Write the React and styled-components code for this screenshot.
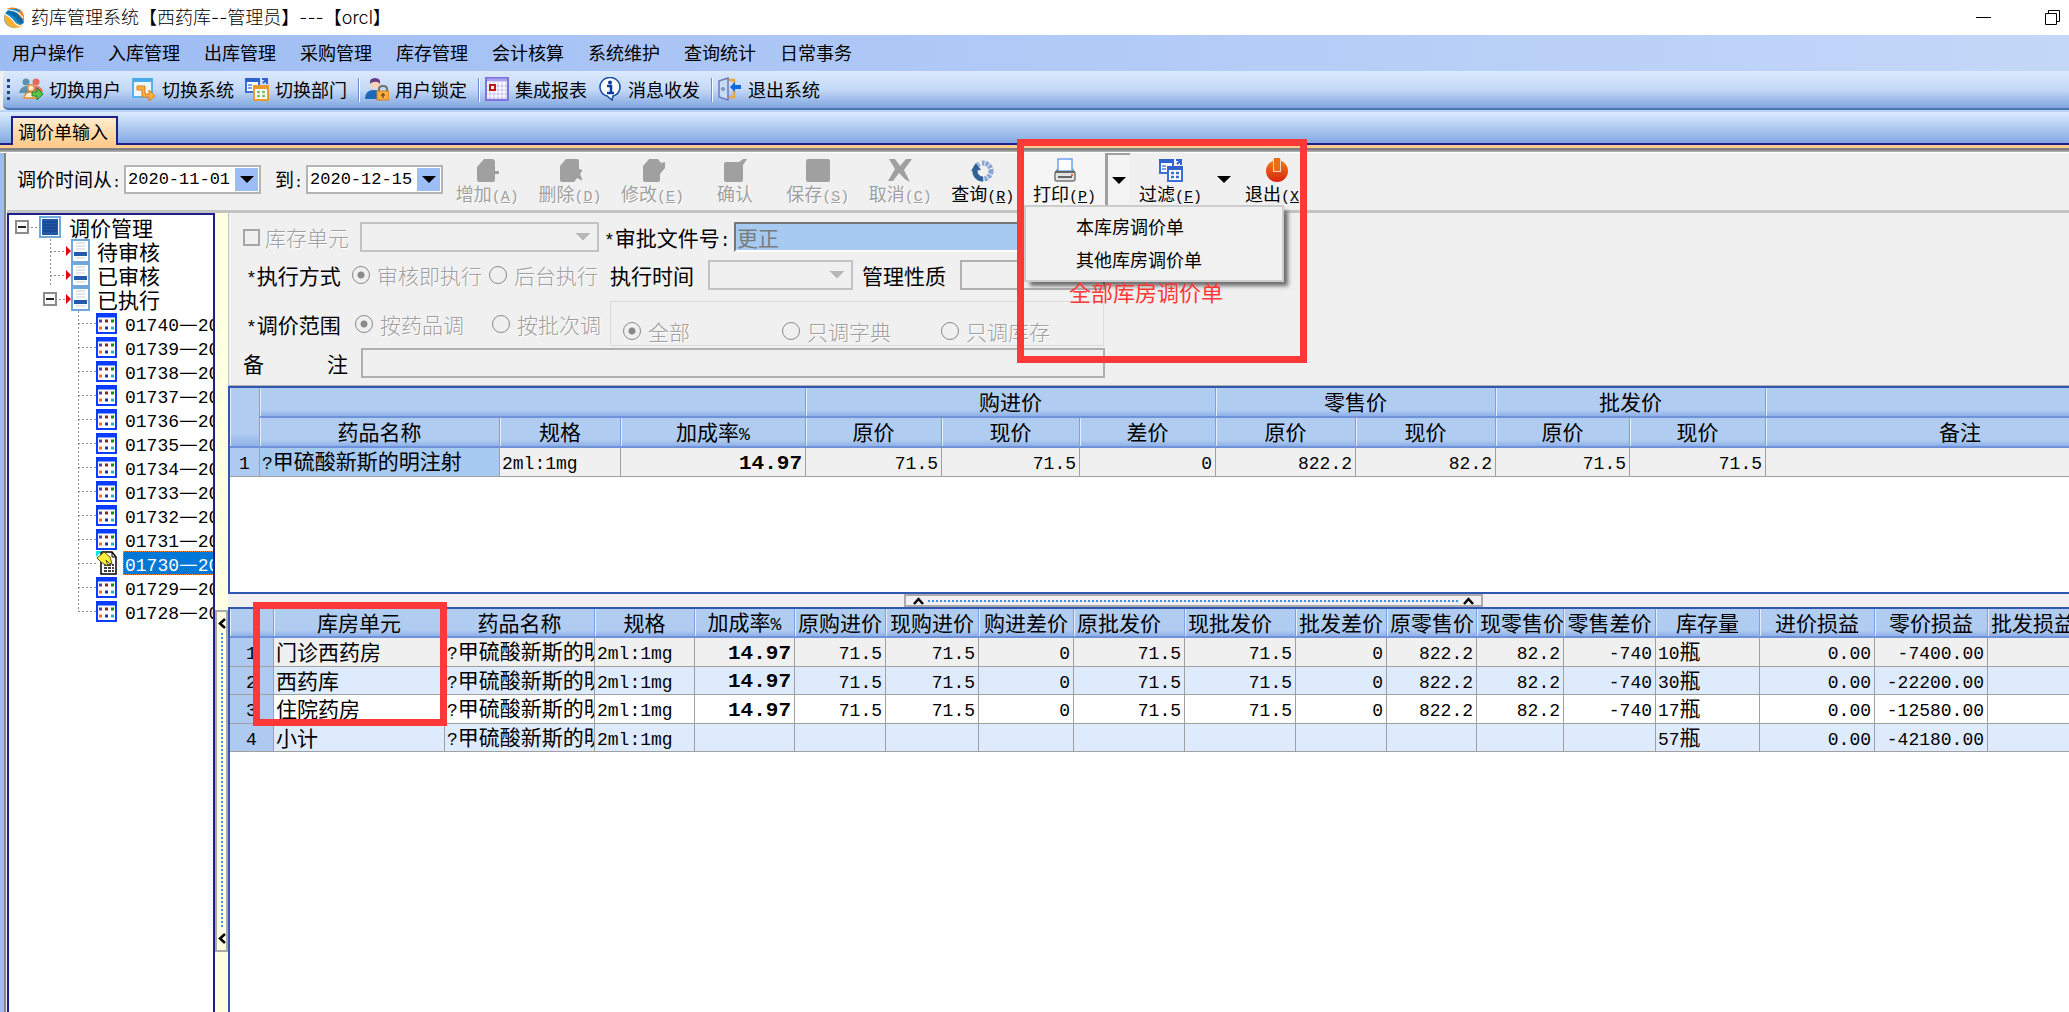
import styled, { createGlobalStyle, css } from "styled-components";

const GlobalStyle = createGlobalStyle`
  * {
    box-sizing: border-box;
  }
  body {
    margin: 0;
    background: #f0f0f0;
    color: #000;
    font-family: "Noto Sans CJK SC", sans-serif;
    font-size: 18px;
    font-weight: 400;
  }
  button, input, select {
    margin: 0;
    padding: 0;
    border: none;
    background: none;
    border-radius: 0;
    color: inherit;
    font: inherit;
  }
  svg {
    flex: none;
  }
`;

const Mono = styled.span`
  font-family: "Liberation Mono", monospace;
  font-size: ${(props) => props.$size || 18}px;
  line-height: 1;
`;

const Window = styled.div`
  height: 100vh;
  display: flex;
  flex-direction: column;
  overflow: hidden;
  position: relative;
`;

/* title bar */

const TitleBar = styled.header`
  flex: none;
  height: 35px;
  padding: 0 8px 0 3px;
  display: flex;
  align-items: center;
  background: #fff;
`;

const Title = styled.h1`
  margin: 0 auto 0 4px;
  font-family: Inter, "Noto Sans CJK SC", sans-serif;
  font-size: 18px;
  font-weight: 300;
  line-height: 34px;
`;

const WindowButton = styled.button`
  width: ${(props) => (props.$end ? 44 : 68)}px;
  height: 35px;
  display: flex;
  align-items: center;
  justify-content: ${(props) => (props.$end ? "flex-end" : "center")};
`;

/* menu and tool bars */

const MenuBar = styled.nav`
  flex: none;
  height: 36px;
  padding-left: 12px;
  display: flex;
  align-items: flex-start;
  gap: 24px;
  background: linear-gradient(90deg, #9ebcf4, #c3d7f8);
`;

const MenuItem = styled.button`
  line-height: 34px;
`;

const ToolBar = styled.div`
  flex: none;
  height: 39px;
  margin-left: 3px;
  padding-left: 4px;
  display: flex;
  align-items: center;
  border-bottom: 2px solid #4b74b4;
  border-radius: 5px 0 0 5px;
  background: linear-gradient(#dbe9fc, #c4d9f7 50%, #7fa5df);
`;

const Grip = styled.span`
  width: 3px;
  height: 21px;
  margin-right: 9px;
  background: repeating-linear-gradient(#27417f 0 3px, transparent 3px 6px);
`;

const ToolItem = styled.button`
  display: flex;
  align-items: center;
  gap: 6px;
  padding: 0 11px 2px 0;
  line-height: 34px;
`;

const ToolSeparator = styled.span`
  width: 2px;
  height: 24px;
  margin-right: 5px;
  border-left: 1px solid #6a8ccb;
  background: #fff;
`;

const TabStrip = styled.div`
  flex: none;
  height: 35px;
  padding-left: 11px;
  display: flex;
  align-items: flex-end;
  border-top: 2px solid #b9d4f8;
  border-bottom: 2px solid #1d2089;
  background: linear-gradient(#dbebff, #84a9e2);
`;

const Tab = styled.button`
  height: 29px;
  margin-bottom: -2px;
  padding: 0 8px 2px 5px;
  border: 2px solid #1d2089;
  border-bottom: none;
  background: linear-gradient(#ffeccb, #ffcb8e);
  line-height: 24px;
`;

const TabEdge = styled.div`
  flex: none;
  height: 8px;
  border-top: 3px solid #ffcb8e;
  border-bottom: 1px solid #fff;
  background: linear-gradient(#8a8a8a, #777 30%, #b8b8b8);
`;

const Frame = styled.div`
  flex: 1;
  min-height: 0;
  display: flex;
  flex-direction: column;
  border-left: 4px solid #9dbdf2;
  box-shadow: inset 2px 0 #858585;
  padding-left: 3px;
`;

/* command bar */

const CommandBar = styled.div`
  flex: none;
  height: 60px;
  padding-left: 10px;
  display: flex;
  align-items: flex-start;
  border-bottom: 3px solid #c3c3c3;
  position: relative;
  z-index: 2;
`;

const DateLabel = styled.label`
  margin-top: 12px;
  font-size: 19px;
  line-height: 28px;
  white-space: nowrap;
`;

const DateBox = styled.span`
  width: 137px;
  height: 29px;
  margin: 12px ${(props) => (props.$last ? 3 : 14)}px 0 3px;
  padding: 1px;
  display: flex;
  flex: none;
  border: 2px solid #b4b4b4;
  background: #fff;
`;

const DateInput = styled.input`
  flex: 1;
  min-width: 0;
  padding-left: 1px;
  font-family: "Liberation Mono", monospace;
  font-size: 17px;
`;

const DateDrop = styled.button`
  width: 23px;
  background: #9dbdf6;
  display: flex;
  align-items: center;
  justify-content: center;
`;

const Triangle = styled.span`
  border: 7px solid transparent;
  border-top-color: #000;
  border-bottom: none;
`;

const Commands = styled.div`
  flex: 0 0 578px;
  display: flex;
`;

const Command = styled.button`
  ${(props) => (props.$fixed ? "flex: 0 0 81px;" : "flex: 1;")}
  height: 52px;
  display: flex;
  flex-direction: column;
  align-items: center;
  padding-top: 5px;
  line-height: 22px;
  white-space: nowrap;
  &:disabled {
    color: #a0a0a0;
    text-shadow: 1px 1px #fff;
  }
`;

const PrintGroup = styled.div`
  position: relative;
  display: flex;
  background: #f5f5f5;
`;

const DropButton = styled.button`
  width: 25px;
  height: 52px;
  display: flex;
  align-items: center;
  justify-content: center;
  ${(props) =>
    props.$open &&
    css`
      border-left: 3px solid #a0a0a0;
      border-top: 2px solid #a0a0a0;
      background: #f3f3f3;
    `}
`;

const DropMenu = styled.div`
  position: absolute;
  left: 0;
  top: 52px;
  width: 260px;
  height: 77px;
  padding: 3px 0 4px 50px;
  display: flex;
  flex-direction: column;
  border: 2px solid #ccc;
  background: #f1f1f1;
  box-shadow: 5px 5px 4px -1px rgba(0, 0, 0, 0.55);
`;

const DropItem = styled.button`
  height: 33px;
  line-height: 33px;
  text-align: left;
`;

const RedBox = styled.div`
  position: absolute;
  border: 7px solid #fd3838;
  pointer-events: none;
`;

const PrintMark = styled(RedBox)`
  left: -7px;
  top: -14px;
  width: 290px;
  height: 224px;
`;

const UnitMark = styled(RedBox)`
  left: 23px;
  top: -7px;
  width: 194px;
  height: 124px;
`;

const RedNote = styled.span`
  position: absolute;
  left: 45px;
  top: 122px;
  color: #fd3838;
  font-size: 22px;
  line-height: 32px;
  white-space: nowrap;
`;

/* tree */

const Body = styled.div`
  flex: 1;
  min-height: 0;
  display: flex;
`;

const Tree = styled.ul`
  flex: 0 0 208px;
  margin: 0;
  padding: 0;
  list-style: none;
  overflow: hidden;
  border: 2px solid #1d2089;
  border-bottom: none;
  background: #fff;
  font-size: 21px;
`;

const TreeRow = styled.li`
  height: 24px;
  display: flex;
  align-items: center;
  line-height: 22px;
  white-space: nowrap;
`;

const Indent = styled.span`
  flex: 0 0 ${(props) => props.$width}px;
`;

/* vertical guide with a branch to the right */
const Guide = styled.span`
  flex: 0 0 ${(props) => props.$width}px;
  height: ${(props) => (props.$last ? 13 : 24)}px;
  align-self: flex-start;
  background:
    linear-gradient(90deg, #8c8c8c 50%, transparent 50%) 0 12px / 4px 1px repeat-x,
    linear-gradient(#8c8c8c 50%, transparent 50%) 0 0 / 1px 4px repeat-y;
`;

const Expander = styled.button`
  flex: none;
  width: 14px;
  height: 14px;
  border: 2px solid #8c8c8c;
  background: linear-gradient(#222, #222) center / 8px 2px no-repeat #fff;
`;

const Branch = styled.span`
  flex: 0 0 ${(props) => props.$width}px;
  height: 1px;
  background: repeating-linear-gradient(90deg, transparent 0 2px, #8c8c8c 2px 4px);
`;

const RedArrow = styled.span`
  flex: none;
  border: 5px solid transparent;
  border-left-color: #e60012;
  border-right: none;
`;

const TreeText = styled.span`
  margin-left: ${(props) => props.$gap}px;
`;

const TreeCode = styled.span`
  flex: 1;
  height: 24px;
  margin-left: 6px;
  padding-left: 2px;
  line-height: 22px;
  ${(props) =>
    props.$selected &&
    css`
      color: #fff;
      background: #0078d7;
      outline: 1px dotted #ff8728;
      outline-offset: -1px;
    `}
`;

const SideSplitter = styled.div`
  flex: 0 0 13px;
  padding-top: 397px;
  background: #ffffe1;
`;

const Handle = styled.div`
  display: flex;
  align-items: center;
  justify-content: space-between;
  border: 2px solid #aaa;
  background: ${(props) => (props.$vertical ? "#ffffe1" : "#f0f0f0")};
  ${(props) =>
    props.$vertical
      ? "height: 342px; flex-direction: column; padding: 6px 0;"
      : "width: 30%; height: 13px; margin: 0 auto; padding: 0 7px;"}
`;

const Dots = styled.span`
  flex: 1;
  ${(props) =>
    props.$vertical
      ? "width: 2px; margin: 4px 0; background: repeating-linear-gradient(#3c94de 0 2px, transparent 2px 4px);"
      : "height: 2px; margin: 0 4px; background: repeating-linear-gradient(90deg, #3c94de 0 2px, transparent 2px 4px);"}
`;

const Main = styled.main`
  flex: 1;
  min-width: 0;
  display: flex;
  flex-direction: column;
  overflow: hidden;
`;

/* form */

const Form = styled.form`
  flex: none;
  height: 173px;
  padding: 9px 0 0 14px;
  border-left: 1px solid #c3c3c3;
  border-bottom: 1px solid #b0b0b0;
  font-size: 21px;
`;

const FormRow = styled.div`
  height: ${(props) => props.$height || 38}px;
  display: flex;
  align-items: flex-start;
`;

const FieldLabel = styled.label`
  flex: none;
  width: ${(props) => props.$width}px;
  padding-left: ${(props) => props.$indent || 0}px;
  line-height: 30px;
  white-space: nowrap;
  ${(props) =>
    props.$muted &&
    css`
      color: #a0a0a0;
      text-shadow: 1px 1px #fff;
      font-weight: 300;
    `}
`;

const NoteLabel = styled(FieldLabel)`
  display: flex;
  justify-content: space-between;
  margin-right: 13px;
`;

const CheckBox = styled.input`
  appearance: none;
  width: 17px;
  height: 17px;
  margin: 7px 5px 0 0;
  border: 2px solid #a6a6a6;
`;

const Radio = styled.input`
  appearance: none;
  flex: none;
  width: 18px;
  height: 18px;
  margin: 6px 7px 0 0;
  border: 1px solid #8a8a8a;
  border-radius: 50%;
  &:checked {
    background: radial-gradient(circle, #8a8a8a 3px, transparent 4px);
  }
`;

const Combo = styled.select`
  appearance: none;
  flex: none;
  width: ${(props) => props.$width}px;
  height: 30px;
  margin-right: ${(props) => props.$after}px;
  border: 2px solid #b0b0b0;
  background:
    linear-gradient(to bottom right, #a0a0a0 50%, transparent 50%) right 7px center / 7px 8px no-repeat,
    linear-gradient(to bottom left, #a0a0a0 50%, transparent 50%) right 14px center / 7px 8px no-repeat;
`;

const TextField = styled.input`
  flex: none;
  width: ${(props) => props.$width}px;
  height: 30px;
  border: 2px solid #b0b0b0;
  ${(props) =>
    props.$filled &&
    css`
      padding-left: 1px;
      border-color: #777 #fff #fff #777;
      background: #a6caf0;
      color: #7b7b7b;
    `}
`;

const ScopeLeft = styled.div`
  width: 367px;
  padding-top: 8px;
  display: flex;
`;

const ScopeBox = styled.fieldset`
  width: 494px;
  height: 45px;
  margin: 0;
  padding: 14px 0 0 12px;
  display: flex;
  align-items: flex-start;
  border: 1px solid #dcdcdc;
`;

/* grids */

const GridBox = styled.div`
  ${(props) => (props.$grow ? "flex: 1;" : "flex: 0 0 208px;")}
  position: relative;
  border: 2px solid #3158b0;
  border-right: none;
  ${(props) => props.$grow && "border-bottom: none;"}
  background: #fff;
`;

const Grid = styled.table`
  table-layout: fixed;
  width: ${(props) => props.$width}px;
  border-collapse: separate;
  border-spacing: 0;
  font-size: 21px;
`;

const Th = styled.th`
  height: ${(props) => props.$height || 30}px;
  padding: 0 3px 2px;
  border-right: 1px solid #7c9ee2;
  border-bottom: 2px solid #6f93da;
  box-shadow: inset 1px 0 #e4eefc;
  background: linear-gradient(#b0ccf1 78%, #8fb1e8);
  font-weight: 400;
  line-height: 24px;
  overflow: hidden;
  white-space: nowrap;
  text-align: ${(props) => props.$align || "center"};
`;

const Tr = styled.tr`
  height: 28px;
  background: ${(props) => props.$tone};
  &:nth-child(odd) {
    height: 29px;
  }
`;

const Td = styled.td`
  padding: ${(props) => (props.$align === "right" ? "0 3px 2px 0" : "0 2px 2px")};
  border-right: 1px solid #a0a0a0;
  border-bottom: 1px solid #a0a0a0;
  line-height: 22px;
  overflow: hidden;
  white-space: nowrap;
  text-align: ${(props) => props.$align || "left"};
  ${(props) => props.$active && "background: #a6caf0;"}
  ${(props) =>
    props.$bold &&
    css`
      & > span {
        font-size: 21px;
        font-weight: 700;
      }
    `}
`;

const RowNumber = styled(Td)`
  background: #aecaf0;
  text-align: center;
`;

const GridSplitter = styled.div`
  flex: none;
  width: calc(100% + 89px);
  background: #f0f0f0;
`;

/* icons */

const Logo = () => (
  <svg width="24" height="24" viewBox="0 0 24 24">
    <circle cx="11" cy="12" r="10" fill="#1687c9" />
    <path d="M3 3Q11-1 18 5Q14 5 15 9Q20 12 21 17Q22 7 17 3Z" fill="#f58220" />
    <path d="M1 12Q3 21 11 22Q18 22 20 19Q14 19 11 15Q6 12 3 8Z" fill="#fbb034" />
    <path d="M3 7Q12 9 15 15Q18 19 21 17Q18 9 11 6Q6 4 3 7Z" fill="#0867a8" />
    <path d="M2 8Q9 12 12 17Q14 20 19 20M6 4Q15 4 20 12" fill="none" stroke="#fff" strokeWidth="1.2" />
  </svg>
);

const SwitchUserIcon = () => (
  <svg width="24" height="24" viewBox="0 0 24 24">
    <circle cx="7" cy="5" r="3.5" fill="#5d92ae" />
    <path d="M0 16Q1 10 7 9Q12 10 12 16Z" fill="#5d92ae" />
    <circle cx="17" cy="5" r="3.5" fill="#e26b5c" />
    <path d="M12 14Q13 9 18 9Q23 10 24 15Z" fill="#e26b5c" />
    <circle cx="12" cy="11" r="3.3" fill="#fff1dd" stroke="#e58a2f" strokeWidth="1.5" />
    <path d="M5 21Q6 15 12 15Q16 15 17 21Z" fill="#fff1dd" stroke="#e58a2f" strokeWidth="1.5" />
    <path d="M13 15h5v-4l6 6-6 6v-4h-5z" fill="#5cc64a" stroke="#23832b" />
  </svg>
);

const SwitchSystemIcon = () => (
  <svg width="24" height="24" viewBox="0 0 24 24">
    <rect x="1" y="2" width="19" height="18" fill="#eef7fe" stroke="#55b4ec" strokeWidth="2" />
    <path d="M1 3h19" stroke="#4aa9e8" strokeWidth="4" />
    <path d="M5 9h8v8h4v-4l6 6-6 5v-4h-7v-7H5z" fill="#fbb040" stroke="#e07c1a" />
  </svg>
);

const SwitchDeptIcon = ({ mono }) => (
  <svg width="24" height="24" viewBox="0 0 24 24">
    <rect x="1" y="2" width="13" height="13" fill="#fff" stroke="#3c6fd6" strokeWidth="2" />
    <path d="M0 3h15" stroke="#2f62cc" strokeWidth="4" />
    <path d="M3 8h4M3 11h4" stroke="#7fa2e6" strokeWidth="2" />
    <path d="M17 2h5v5M22 2l-4 4" fill="none" stroke="#2f62cc" strokeWidth="2" />
    <rect x="9" y="9" width="14" height="14" fill="#fff" stroke={mono ? "#3c6fd6" : "#eb9a2e"} strokeWidth="2" />
    <path d="M8 10h16" stroke={mono ? "#2f62cc" : "#eb9a2e"} strokeWidth="4" />
    <path d="M12 15h3M17 15h3M12 19h3M17 19h3" stroke={mono ? "#3c6fd6" : "#86bf6b"} strokeWidth="2.5" />
  </svg>
);

const LockUserIcon = () => (
  <svg width="24" height="24" viewBox="0 0 24 24">
    <path d="M0 22Q0 13 9 13Q17 13 18 22Z" fill="#1d68b8" />
    <circle cx="10" cy="7" r="5" fill="#f4d4bd" />
    <path d="M5 7Q4 1 10 1Q16 1 15 7Q13 4 9 5Q6 5 5 7Z" fill="#6a3a80" />
    <path d="M14 14v-2q0-3 4-3t4 3v2" fill="none" stroke="#6f6f6f" strokeWidth="2" />
    <rect x="12" y="14" width="12" height="9" fill="#f3b04a" stroke="#cf7d1a" />
    <path d="M18 16v5M16 18h4" stroke="#8b4c10" strokeWidth="1.5" />
  </svg>
);

const ReportIcon = () => (
  <svg width="24" height="24" viewBox="0 0 24 24">
    <rect x="1" y="1" width="22" height="22" fill="#fff" stroke="#7b74dc" strokeWidth="2" />
    <path d="M5 5v17M9 5v17M13 5v17M17 5v17M21 5v17M2 9h20M2 13h20M2 17h20M2 21h20" stroke="#c3beef" />
    <path d="M2 3h20" stroke="#a9a3ee" strokeWidth="3" />
    <rect x="5" y="8" width="5" height="5" fill="#fff" stroke="#c41616" strokeWidth="2" />
  </svg>
);

const InfoIcon = () => (
  <svg width="24" height="24" viewBox="0 0 24 24">
    <path d="M9 19a10 9.5 0 1 1 6 0L14 23z" fill="#fff" stroke="#1b4ea8" strokeWidth="1.6" />
    <circle cx="12" cy="5.5" r="2" fill="#0a3a9c" />
    <path d="M9 9h4v7M9 16h7" fill="none" stroke="#0a3a9c" strokeWidth="2.5" />
  </svg>
);

const ExitDoorIcon = () => (
  <svg width="24" height="24" viewBox="0 0 24 24">
    <path d="M8 3h8v17H8" fill="none" stroke="#e9a93b" strokeWidth="2.5" />
    <path d="M1 4l9-3v22l-9-3z" fill="#c5dcf6" stroke="#7079b8" strokeWidth="1.5" />
    <circle cx="5" cy="12" r="1.3" fill="#fff" stroke="#4a5b9c" />
    <path d="M12 10l5-5v3h6v4h-6v3z" fill="#0a6bd6" />
  </svg>
);

const CommandIcon = ({ d }) => (
  <svg width="24" height="24" viewBox="0 0 24 24">
    <path d={d} fill="#a0a0a0" />
  </svg>
);

const QueryIcon = () => (
  <svg width="24" height="24" viewBox="0 0 24 24">
    <circle cx="12" cy="13" r="8" fill="none" stroke="#86a5d6" strokeWidth="5" strokeDasharray="3 1" />
    <path d="M12 21A8 8 0 0 1 4 12" fill="none" stroke="#2f6298" strokeWidth="5" />
    <path d="M0 13l5-8 5 7z" fill="#2f6298" />
    <path d="M6 3l5 0v6z" fill="#f0f0f0" />
  </svg>
);

const PrinterIcon = () => (
  <svg width="24" height="24" viewBox="0 0 24 24">
    <path d="M5 11L2 15v6q0 2 2 2h16q2 0 2-2v-6l-3-4z" fill="#e4e4e4" stroke="#777" strokeWidth="1.5" />
    <path d="M5 1h14v12H5z" fill="#fff" stroke="#6aa2ee" strokeWidth="1.5" />
    <path d="M2 14h20M5 19h14" stroke="#666" strokeWidth="2" />
    <circle cx="19" cy="17" r="1" fill="#e53c22" />
  </svg>
);

const PowerIcon = () => (
  <svg width="24" height="24" viewBox="0 0 24 24">
    <defs>
      <linearGradient id="power" x1="0" y1="0" x2="0" y2="1">
        <stop offset="0" stopColor="#f08019" />
        <stop offset="1" stopColor="#d8220e" />
      </linearGradient>
    </defs>
    <circle cx="12" cy="13" r="11" fill="url(#power)" />
    <path d="M8 0h8v14H8z" fill="#f3d6bb" />
    <path d="M9 0h6v13H9z" fill="#e86f12" />
  </svg>
);

const RootIcon = () => (
  <svg width="22" height="22" viewBox="0 0 22 22">
    <rect x="1" y="1" width="20" height="20" fill="#fff" stroke="#6fa8dc" strokeWidth="2" />
    <rect x="3" y="3" width="16" height="16" fill="#2458a8" />
    <path d="M4 6h14M4 9h14M4 12h14M4 15h14" stroke="#0d3a80" />
  </svg>
);

const PageIcon = () => (
  <svg width="19" height="24" viewBox="0 0 19 24">
    <rect x="1" y="1" width="17" height="22" fill="#fff" stroke="#6fa8dc" strokeWidth="2" />
    <path d="M5 4h9M5 7h9M5 10h9M5 19h9" stroke="#ccc" />
    <path d="M3 15h13" stroke="#2458a8" strokeWidth="4" />
  </svg>
);

const SheetIcon = () => (
  <svg width="21" height="21" viewBox="0 0 21 21">
    <rect x="1" y="1" width="19" height="19" fill="#fff" stroke="#0a3cff" strokeWidth="2" />
    <path d="M0 2h21" stroke="#0a3cff" strokeWidth="5" />
    <path d="M3 8h3" stroke="#6b2fa0" strokeWidth="3" />
    <path d="M9 8h3" stroke="#992020" strokeWidth="3" />
    <path d="M15 8h3" stroke="#009a00" strokeWidth="3" />
    <path d="M3 15h3" stroke="#ff6a2a" strokeWidth="3" />
    <path d="M9 15h3" stroke="#10399c" strokeWidth="3" />
    <path d="M15 15h3" stroke="#22b0c8" strokeWidth="3" />
  </svg>
);

const OpenSheetIcon = () => (
  <svg width="21" height="24" viewBox="0 0 21 24">
    <path d="M5 1h11l4 5v17H5z" fill="#fff" stroke="#000" strokeWidth="1.5" />
    <path d="M16 1v5h4" fill="none" stroke="#000" />
    <path d="M8 14h10M8 17h10M8 20h10" stroke="#000" strokeDasharray="3 1" strokeWidth="1.5" />
    <path d="M0 0h6L0 6z" fill="#00e5e5" />
    <path d="M1 7L8 1l6 5 2 7-3-1-3-3 2 6-4-2-3-2z" fill="#ffee3a" stroke="#5a5200" />
  </svg>
);

const Caret = ({ left }) => (
  <svg width={left ? 8 : 11} height={left ? 11 : 8} viewBox={left ? "0 0 8 11" : "0 0 11 8"}>
    <path d={left ? "M7 1L2 5.5L7 10" : "M1 7L5.5 2L10 7"} fill="none" stroke="#000" strokeWidth="2.5" />
  </svg>
);

/* data */

const menus = ["用户操作", "入库管理", "出库管理", "采购管理", "库存管理", "会计核算", "系统维护", "查询统计", "日常事务"];

const tools = [
  { text: "切换用户", icon: <SwitchUserIcon /> },
  { text: "切换系统", icon: <SwitchSystemIcon /> },
  { text: "切换部门", icon: <SwitchDeptIcon />, split: true },
  { text: "用户锁定", icon: <LockUserIcon />, split: true },
  { text: "集成报表", icon: <ReportIcon /> },
  { text: "消息收发", icon: <InfoIcon />, split: true },
  { text: "退出系统", icon: <ExitDoorIcon /> },
];

const commands = [
  { text: "增加", hot: "A", d: "M2 9L9 1h8q3 0 3 3v9h4v3h-4v6q0 2-2 2H4q-2 0-2-2z" },
  { text: "删除", hot: "D", d: "M2 8L8 1h11q2 0 2 2v8l4 1-3 4 3 7-6-3-3 4H4q-2 0-2-2z" },
  { text: "修改", hot: "E", d: "M2 8L8 1h9l3 4 4-1v6l-5 6v6q0 2-2 2H4q-2 0-2-2z" },
  { text: "确认", d: "M1 6q0-2 2-2h13l4-3h4l-4 6v15q0 2-2 2H3q-2 0-2-2z" },
  { text: "保存", hot: "S", d: "M0 3q0-2 2-2h20q2 0 2 2v19q0 2-2 2H2q-2 0-2-2z" },
  { text: "取消", hot: "C", d: "M1 1h6l5 7 6-7h6l-8 11 6 12-4-2-7-7-6 8H0l7-12z" },
];

const codes = ["01740", "01739", "01738", "01737", "01736", "01735", "01734", "01733", "01732", "01731", "01730", "01729", "01728"];

const priceCols = [30, 240, 121, 185, 136, 138, 136, 140, 140, 134, 136, 389];
const priceHeads = ["药品名称", "规格", "加成率%", "原价", "现价", "差价", "原价", "现价", "原价", "现价", "备注"];
const priceRow = ["71.5", "71.5", "0", "822.2", "82.2", "71.5", "71.5", ""];

const stockCols = [44, 171, 150, 100, 100, 91, 93, 95, 111, 111, 91, 90, 87, 92, 104, 115, 113, 115];
const stockHeads = [
  "库房单元", "药品名称", "规格", "加成率%", "原购进价", "现购进价", "购进差价", "原批发价", "现批发价",
  "批发差价", "原零售价", "现零售价", "零售差价", "库存量", "进价损益", "零价损益", "批发损益",
];
const leftHeads = ["原批发价", "现批发价", "现零售价", "批发损益"];
const prices = ["14.97", "71.5", "71.5", "0", "71.5", "71.5", "0", "822.2", "82.2", "-740"];
const stockRows = [
  { unit: "门诊西药房", prices, count: "10", loss: "-7400.00", tone: "#f0f0f0" },
  { unit: "西药库", prices, count: "30", loss: "-22200.00", tone: "#deebfc" },
  { unit: "住院药房", prices, count: "17", loss: "-12580.00", tone: "#fff" },
  { unit: "小计", prices: prices.map(() => ""), count: "57", loss: "-42180.00", tone: "#deebfc" },
];

const total = (widths) => widths.reduce((sum, width) => sum + width, 0);

const Columns = ({ widths }) => (
  <colgroup>
    {widths.map((width, i) => (
      <col key={i} width={width} />
    ))}
  </colgroup>
);

const headText = (text) =>
  text.endsWith("%") ? (
    <>
      {text.slice(0, -1)}
      <Mono>%</Mono>
    </>
  ) : (
    text
  );

const HotKey = ({ letter }) => (
  <Mono $size={15}>
    (<u>{letter}</u>)
  </Mono>
);

const TreePanel = () => (
  <Tree>
    <TreeRow>
      <Indent $width={6} />
      <Expander aria-label="调价管理" />
      <Branch $width={10} />
      <RootIcon />
      <TreeText $gap={8}>调价管理</TreeText>
    </TreeRow>
    {["待审核", "已审核"].map((text) => (
      <TreeRow key={text}>
        <Indent $width={41} />
        <Guide $width={16} />
        <RedArrow />
        <PageIcon />
        <TreeText $gap={7}>{text}</TreeText>
      </TreeRow>
    ))}
    <TreeRow>
      <Indent $width={34} />
      <Expander aria-label="已执行" />
      <Branch $width={9} />
      <RedArrow />
      <PageIcon />
      <TreeText $gap={7}>已执行</TreeText>
    </TreeRow>
    {codes.map((code, i) => (
      <TreeRow key={code}>
        <Indent $width={69} />
        <Guide $width={18} $last={i === codes.length - 1} />
        {code === "01730" ? <OpenSheetIcon /> : <SheetIcon />}
        <TreeCode $selected={code === "01730"}>
          <Mono>{code}</Mono>—<Mono>20</Mono>
        </TreeCode>
      </TreeRow>
    ))}
  </Tree>
);

const PriceForm = () => (
  <Form>
    <FormRow>
      <CheckBox type="checkbox" id="unit" disabled />
      <FieldLabel htmlFor="unit" $width={95} $muted>库存单元</FieldLabel>
      <Combo $width={239} $after={5} aria-label="库存单元" disabled />
      <FieldLabel htmlFor="doc" $width={130}><Mono>*</Mono>审批文件号<Mono>:</Mono></FieldLabel>
      <TextField id="doc" $width={371} $filled defaultValue="更正" />
    </FormRow>
    <FormRow $height={41}>
      <FieldLabel as="span" $width={109} $indent={3}><Mono>*</Mono>执行方式</FieldLabel>
      <Radio type="radio" name="mode" id="now" defaultChecked disabled />
      <FieldLabel htmlFor="now" $width={112} $muted>审核即执行</FieldLabel>
      <Radio type="radio" name="mode" id="later" disabled />
      <FieldLabel htmlFor="later" $width={96} $muted>后台执行</FieldLabel>
      <FieldLabel htmlFor="time" $width={98}>执行时间</FieldLabel>
      <Combo id="time" $width={145} $after={9} disabled />
      <FieldLabel htmlFor="kind" $width={98}>管理性质</FieldLabel>
      <TextField id="kind" $width={145} disabled />
    </FormRow>
    <FormRow $height={47}>
      <ScopeLeft>
        <FieldLabel as="span" $width={112} $indent={3}><Mono>*</Mono>调价范围</FieldLabel>
        <Radio type="radio" name="scope" id="drug" defaultChecked disabled />
        <FieldLabel htmlFor="drug" $width={112} $muted>按药品调</FieldLabel>
        <Radio type="radio" name="scope" id="batch" disabled />
        <FieldLabel htmlFor="batch" $width={90} $muted>按批次调</FieldLabel>
      </ScopeLeft>
      <ScopeBox>
        <Radio type="radio" name="part" id="all" defaultChecked disabled />
        <FieldLabel htmlFor="all" $width={134} $muted>全部</FieldLabel>
        <Radio type="radio" name="part" id="dict" disabled />
        <FieldLabel htmlFor="dict" $width={134} $muted>只调字典</FieldLabel>
        <Radio type="radio" name="part" id="stock" disabled />
        <FieldLabel htmlFor="stock" $width={90} $muted>只调库存</FieldLabel>
      </ScopeBox>
    </FormRow>
    <FormRow $height={30}>
      <NoteLabel htmlFor="note" $width={105}>
        <span>备</span>
        <span>注</span>
      </NoteLabel>
      <TextField id="note" $width={744} disabled />
    </FormRow>
  </Form>
);

const PriceGrid = () => (
  <GridBox>
    <Grid $width={total(priceCols)}>
      <Columns widths={priceCols} />
      <thead>
        <tr>
          <Th rowSpan={2} />
          <Th colSpan={3} />
          <Th colSpan={3}>购进价</Th>
          <Th colSpan={2}>零售价</Th>
          <Th colSpan={2}>批发价</Th>
          <Th />
        </tr>
        <tr>
          {priceHeads.map((text, i) => (
            <Th key={i}>{headText(text)}</Th>
          ))}
        </tr>
      </thead>
      <tbody>
        <Tr $tone="#f0f0f0">
          <RowNumber><Mono>1</Mono></RowNumber>
          <Td $active><Mono>?</Mono>甲硫酸新斯的明注射</Td>
          <Td><Mono>2ml:1mg</Mono></Td>
          <Td $align="right" $bold><Mono>14.97</Mono></Td>
          {priceRow.map((value, i) => (
            <Td key={i} $align="right"><Mono>{value}</Mono></Td>
          ))}
        </Tr>
      </tbody>
    </Grid>
  </GridBox>
);

const StockGrid = () => (
  <GridBox $grow>
    <Grid $width={total(stockCols)}>
      <Columns widths={stockCols} />
      <thead>
        <tr>
          <Th $height={29} />
          {stockHeads.map((text) => (
            <Th key={text} $height={29} $align={leftHeads.includes(text) ? "left" : "center"}>
              {headText(text)}
            </Th>
          ))}
        </tr>
      </thead>
      <tbody>
        {stockRows.map((row, i) => (
          <Tr key={row.unit} $tone={row.tone}>
            <RowNumber><Mono>{i + 1}</Mono></RowNumber>
            <Td>{row.unit}</Td>
            <Td><Mono>?</Mono>甲硫酸新斯的明</Td>
            <Td><Mono>2ml:1mg</Mono></Td>
            {row.prices.map((value, n) => (
              <Td key={n} $align="right" $bold={n === 0}><Mono>{value}</Mono></Td>
            ))}
            <Td><Mono>{row.count}</Mono>瓶</Td>
            <Td $align="right"><Mono>0.00</Mono></Td>
            <Td $align="right"><Mono>{row.loss}</Mono></Td>
            <Td />
          </Tr>
        ))}
      </tbody>
    </Grid>
    <UnitMark />
  </GridBox>
);

const App = () => {
  return (
    <Window>
      <GlobalStyle />
      <TitleBar>
        <Logo />
        <Title>药库管理系统【西药库--管理员】---【orcl】</Title>
        <WindowButton aria-label="最小化">
          <svg width="15" height="15"><path d="M0 7.5h15" stroke="#000" /></svg>
        </WindowButton>
        <WindowButton aria-label="还原" $end>
          <svg width="18" height="16">
            <path d="M5.5 3.5v-3h11v11h-3M2.5 3.5h11v11h-11z" fill="none" stroke="#000" />
          </svg>
        </WindowButton>
      </TitleBar>
      <MenuBar>
        {menus.map((text) => (
          <MenuItem key={text}>{text}</MenuItem>
        ))}
      </MenuBar>
      <ToolBar>
        <Grip />
        {tools.map((tool) => [
          <ToolItem key={tool.text}>
            {tool.icon}
            {tool.text}
          </ToolItem>,
          tool.split && <ToolSeparator key={tool.text + "split"} />,
        ])}
      </ToolBar>
      <TabStrip>
        <Tab>调价单输入</Tab>
      </TabStrip>
      <TabEdge />
      <Frame>
        <CommandBar>
          <DateLabel htmlFor="from">调价时间从<Mono $size={15}>:</Mono></DateLabel>
          <DateBox>
            <DateInput id="from" defaultValue="2020-11-01" />
            <DateDrop aria-label="选择日期"><Triangle /></DateDrop>
          </DateBox>
          <DateLabel htmlFor="to">到<Mono $size={15}>:</Mono></DateLabel>
          <DateBox $last>
            <DateInput id="to" defaultValue="2020-12-15" />
            <DateDrop aria-label="选择日期"><Triangle /></DateDrop>
          </DateBox>
          <Commands>
            {commands.map((item) => (
              <Command key={item.text} disabled>
                <CommandIcon d={item.d} />
                <span>
                  {item.text}
                  {item.hot && <HotKey letter={item.hot} />}
                </span>
              </Command>
            ))}
            <Command>
              <QueryIcon />
              <span>查询<HotKey letter="R" /></span>
            </Command>
          </Commands>
          <PrintGroup>
            <Command $fixed>
              <PrinterIcon />
              <span>打印<HotKey letter="P" /></span>
            </Command>
            <DropButton $open aria-label="打印选项"><Triangle /></DropButton>
            <DropMenu>
              <DropItem>本库房调价单</DropItem>
              <DropItem>其他库房调价单</DropItem>
            </DropMenu>
            <RedNote>全部库房调价单</RedNote>
            <PrintMark />
          </PrintGroup>
          <Command $fixed>
            <SwitchDeptIcon mono />
            <span>过滤<HotKey letter="F" /></span>
          </Command>
          <DropButton aria-label="过滤选项"><Triangle /></DropButton>
          <Command $fixed>
            <PowerIcon />
            <span>退出<HotKey letter="X" /></span>
          </Command>
        </CommandBar>
        <Body>
          <TreePanel />
          <SideSplitter>
            <Handle $vertical>
              <Caret left />
              <Dots $vertical />
              <Caret left />
            </Handle>
          </SideSplitter>
          <Main>
            <PriceForm />
            <PriceGrid />
            <GridSplitter>
              <Handle>
                <Caret />
                <Dots />
                <Caret />
              </Handle>
            </GridSplitter>
            <StockGrid />
          </Main>
        </Body>
      </Frame>
    </Window>
  );
};

export default App;
